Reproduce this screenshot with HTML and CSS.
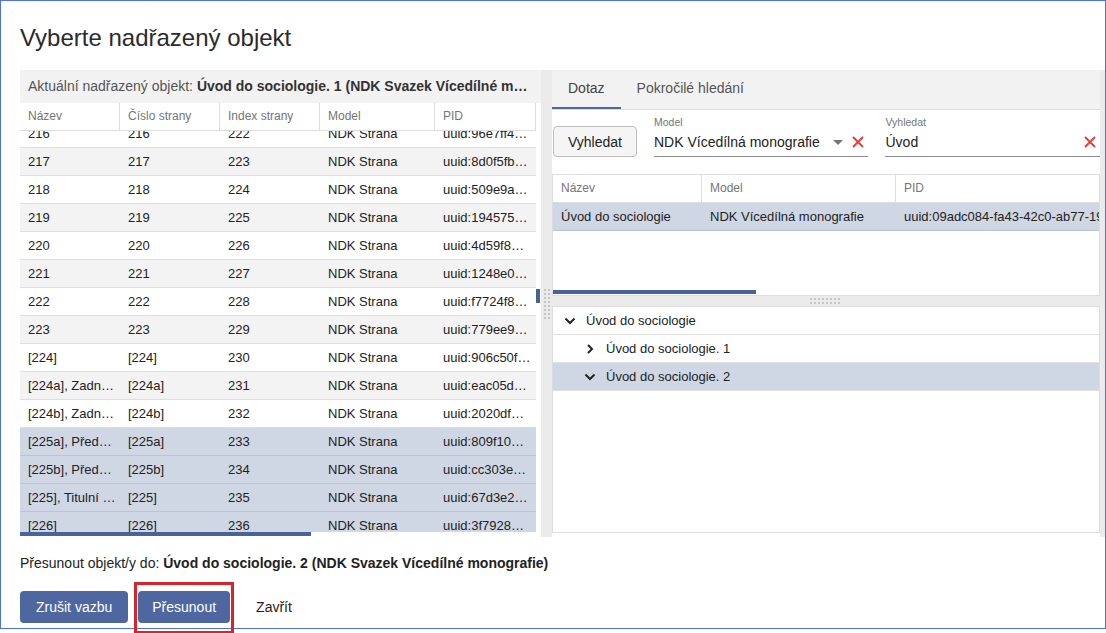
FILE: index.html
```html
<!DOCTYPE html>
<html lang="cs">
<head>
<meta charset="utf-8">
<title>Vyberte nadřazený objekt</title>
<link rel="stylesheet" href="styles.css">
</head>
<body>
<div class="frame">
  <h1 class="title">Vyberte nadřazený objekt</h1>
  <div class="split">
    <section class="left">
      <div class="current">Aktuální nadřazený objekt: <b>Úvod do sociologie. 1 (NDK Svazek Vícedílné m…</b></div>
      <div class="table-area">
        <div class="table">
          <div class="thead">
            <span>Název</span><span>Číslo strany</span><span>Index strany</span><span>Model</span><span>PID</span>
          </div>
          <div class="tbody">
            <div class="rows">
              <div class="row"><span>216</span><span>216</span><span>222</span><span>NDK Strana</span><span>uuid:96e7ff4…</span></div>
              <div class="row"><span>217</span><span>217</span><span>223</span><span>NDK Strana</span><span>uuid:8d0f5fb…</span></div>
              <div class="row"><span>218</span><span>218</span><span>224</span><span>NDK Strana</span><span>uuid:509e9a…</span></div>
              <div class="row"><span>219</span><span>219</span><span>225</span><span>NDK Strana</span><span>uuid:194575…</span></div>
              <div class="row"><span>220</span><span>220</span><span>226</span><span>NDK Strana</span><span>uuid:4d59f8…</span></div>
              <div class="row"><span>221</span><span>221</span><span>227</span><span>NDK Strana</span><span>uuid:1248e0…</span></div>
              <div class="row"><span>222</span><span>222</span><span>228</span><span>NDK Strana</span><span>uuid:f7724f8…</span></div>
              <div class="row"><span>223</span><span>223</span><span>229</span><span>NDK Strana</span><span>uuid:779ee9…</span></div>
              <div class="row"><span>[224]</span><span>[224]</span><span>230</span><span>NDK Strana</span><span>uuid:906c50f…</span></div>
              <div class="row"><span>[224a], Zadn…</span><span>[224a]</span><span>231</span><span>NDK Strana</span><span>uuid:eac05d…</span></div>
              <div class="row"><span>[224b], Zadn…</span><span>[224b]</span><span>232</span><span>NDK Strana</span><span>uuid:2020df…</span></div>
              <div class="row sel"><span>[225a], Před…</span><span>[225a]</span><span>233</span><span>NDK Strana</span><span>uuid:809f10…</span></div>
              <div class="row sel"><span>[225b], Před…</span><span>[225b]</span><span>234</span><span>NDK Strana</span><span>uuid:cc303e…</span></div>
              <div class="row sel"><span>[225], Titulní …</span><span>[225]</span><span>235</span><span>NDK Strana</span><span>uuid:67d3e2…</span></div>
              <div class="row sel"><span>[226]</span><span>[226]</span><span>236</span><span>NDK Strana</span><span>uuid:3f7928…</span></div>
            </div>
          </div>
          <div class="hscroll"><div class="hthumb"></div></div>
        </div>
        <div class="vscroll"><div class="vthumb"></div></div>
      </div>
    </section>

    <div class="gutter-v"><div class="grip-v"></div></div>

    <section class="right">
      <div class="tabs">
        <div class="tab active">Dotaz</div>
        <div class="tab">Pokročilé hledání</div>
      </div>
      <div class="form">
        <button class="btn-search" type="button">Vyhledat</button>
        <div class="field">
          <label>Model</label>
          <div class="input">
            <span class="val">NDK Vícedílná monografie</span>
            <span class="caret"></span>
            <svg class="clear" width="12" height="12" viewBox="0 0 12 12"><path d="M1 1L11 11M11 1L1 11" stroke="#e53935" stroke-width="1.8" fill="none"/></svg>
          </div>
        </div>
        <div class="field">
          <label>Vyhledat</label>
          <div class="input">
            <span class="val">Úvod</span>
            <svg class="clear" width="12" height="12" viewBox="0 0 12 12"><path d="M1 1L11 11M11 1L1 11" stroke="#e53935" stroke-width="1.8" fill="none"/></svg>
          </div>
        </div>
      </div>
      <div class="results">
        <div class="r-head"><span>Název</span><span>Model</span><span>PID</span></div>
        <div class="r-row"><span>Úvod do sociologie</span><span>NDK Vícedílná monografie</span><span>uuid:09adc084-fa43-42c0-ab77-19c2e0a1b7d4</span></div>
        <div class="r-scroll"><div class="r-thumb"></div></div>
      </div>
      <div class="gutter-h"><div class="grip-h"></div></div>
      <div class="tree">
        <div class="tree-row lvl1">
          <svg class="tog" width="12" height="8" viewBox="0 0 12 8"><path d="M1.5 1.5L6 6L10.5 1.5" stroke="#222" stroke-width="2" fill="none"/></svg>
          <span>Úvod do sociologie</span>
        </div>
        <div class="tree-row lvl2">
          <svg class="tog" width="12" height="10" viewBox="0 0 12 10"><path d="M4 1L8 5L4 9" stroke="#222" stroke-width="2" fill="none"/></svg>
          <span>Úvod do sociologie. 1</span>
        </div>
        <div class="tree-row lvl2 sel">
          <svg class="tog" width="12" height="8" viewBox="0 0 12 8"><path d="M1.5 1.5L6 6L10.5 1.5" stroke="#222" stroke-width="2" fill="none"/></svg>
          <span>Úvod do sociologie. 2</span>
        </div>
      </div>
    </section>
    <div class="edge"></div>
  </div>

  <p class="target">Přesunout objekt/y do: <b>Úvod do sociologie. 2 (NDK Svazek Vícedílné monografie)</b></p>

  <div class="actions">
    <button class="btn" type="button">Zrušit vazbu</button>
    <button class="btn compact" type="button">Přesunout</button>
    <button class="btn link" type="button">Zavřít</button>
  </div>

  <div class="annot"></div>
</div>
</body>
</html>
```
FILE: styles.css
```css
* { box-sizing: border-box; }

html, body {
  margin: 0;
  background: #fff;
}

body {
  width: 1106px;
  height: 633px;
  overflow: hidden;
  font-family: "Liberation Sans", Arial, sans-serif;
  color: #222;
}

.frame {
  position: relative;
  width: 1106px;
  height: 629px;
  border: 1px solid #4f6fe6;
  padding: 0 0 0 19px;
  display: flex;
  flex-direction: column;
}

.title {
  margin: 23px 0 0;
  font-size: 24px;
  font-weight: normal;
  line-height: 28px;
  color: #2b2b2b;
}

.split {
  margin-top: 18px;
  height: 467px;
  display: flex;
  background: #ebebeb;
}

/* ---------- left pane ---------- */
.left {
  width: 521px;
  display: flex;
  flex-direction: column;
  background: #fff;
}

.current {
  height: 33px;
  padding: 0 8px;
  background: #f2f2f2;
  font-size: 14px;
  line-height: 33px;
  color: #555;
  white-space: nowrap;
  overflow: hidden;
}

.current b { color: #333; }

.table-area {
  flex: 1;
  display: flex;
  min-height: 0;
}

.table {
  width: 516px;
  display: flex;
  flex-direction: column;
}

.thead,
.row {
  display: grid;
  grid-template-columns: 100px 100px 100px 115px 101px;
}

.thead {
  height: 28px;
  border-bottom: 1px solid #dddddd;
}

.thead span {
  padding: 0 8px;
  border-right: 1px solid #dddddd;
  font-size: 12px;
  line-height: 27px;
  color: #757575;
  white-space: nowrap;
  overflow: hidden;
}

.tbody {
  height: 401px;
  overflow: hidden;
}

.rows { margin-top: -11px; }

.row {
  height: 28px;
  border-bottom: 1px solid #dedede;
  font-size: 13px;
  line-height: 27px;
  background: #fff;
}

.row:nth-child(even) { background: #f3f3f3; }

.row.sel {
  background: #d0d7e4;
  border-bottom-color: #bcc3d1;
}

.row span {
  padding: 0 8px;
  white-space: nowrap;
  overflow: hidden;
}

.hscroll {
  height: 5px;
  background: #fff;
}

.hthumb {
  width: 291px;
  height: 4px;
  background: #4a6396;
}

.vscroll {
  width: 5px;
  background: #fff;
  padding-top: 186px;
}

.vthumb {
  width: 4px;
  height: 14px;
  background: #4a6396;
}

/* ---------- gutters ---------- */
.gutter-v {
  width: 11px;
  display: flex;
  align-items: center;
  justify-content: center;
}

.grip-v {
  width: 6px;
  height: 30px;
  background-image:
    linear-gradient(to right, transparent 2px, #ebebeb 2px),
    linear-gradient(to bottom, #c6c6c6 2px, #ebebeb 2px);
  background-size: 4px 4px;
}

.gutter-h {
  height: 10px;
  display: flex;
  align-items: center;
  justify-content: center;
  background: #ebebeb;
}

.grip-h {
  width: 32px;
  height: 6px;
  background-image:
    linear-gradient(to right, transparent 2px, #ebebeb 2px),
    linear-gradient(to bottom, #c6c6c6 2px, #ebebeb 2px);
  background-size: 4px 4px;
}

/* ---------- right pane ---------- */
.right {
  width: 548px;
  display: flex;
  flex-direction: column;
  background: #fff;
}

.tabs {
  height: 40px;
  display: flex;
  background: #f2f2f2;
  border-bottom: 1px solid #dcdcdc;
}

.tab {
  padding: 0 16px;
  font-size: 14px;
  line-height: 37px;
  color: #555;
}

.tab.active {
  color: #444;
  box-shadow: inset 0 -2px 0 #4e67a0;
}

.form {
  height: 64px;
  padding: 6px 0 0 1px;
  display: flex;
  align-items: flex-start;
  gap: 17px;
}

.btn-search {
  margin-top: 10px;
  height: 31px;
  padding: 0 14px;
  border: 1px solid #bdbdbd;
  border-radius: 4px;
  background: #f5f5f5;
  font-family: inherit;
  font-size: 14px;
  color: #222;
}

.field { width: 215px; }

.field label {
  display: block;
  font-size: 10.5px;
  line-height: 12px;
  color: #757575;
}

.input {
  height: 29px;
  display: flex;
  align-items: center;
  border-bottom: 1px solid #8c8c8c;
  font-size: 14px;
}

.input .val {
  flex: 1;
  white-space: nowrap;
  overflow: hidden;
}

.caret {
  width: 0;
  height: 0;
  margin-right: 9px;
  border-left: 5px solid transparent;
  border-right: 5px solid transparent;
  border-top: 5px solid #757575;
}

.clear {
  margin-right: 4px;
  flex: none;
}

.results {
  height: 122px;
  display: flex;
  flex-direction: column;
  border: 1px solid #dddddd;
}

.r-head,
.r-row {
  display: grid;
  grid-template-columns: 149px 194px 1fr;
  height: 28px;
}

.r-head { border-bottom: 1px solid #dddddd; }

.r-head span {
  padding: 0 8px;
  font-size: 12px;
  line-height: 27px;
  color: #757575;
  border-right: 1px solid #dddddd;
}

.r-head span:last-child { border-right: 0; }

.r-row {
  background: #d0d7e4;
  border-bottom: 1px solid #bcc3d1;
  font-size: 13px;
  line-height: 27px;
}

.r-row span {
  padding: 0 8px;
  white-space: nowrap;
  overflow: hidden;
}

.r-scroll {
  margin-top: auto;
  height: 5px;
}

.r-thumb {
  width: 203px;
  height: 4px;
  background: #4a6396;
}

.tree {
  height: 227px;
  border: 1px solid #dddddd;
}

.tree-row {
  height: 28px;
  display: flex;
  align-items: center;
  gap: 10px;
  border-bottom: 1px solid #e0e0e0;
  font-size: 13px;
}

.tree-row.lvl1 { padding-left: 11px; }
.tree-row.lvl2 { padding-left: 31px; }
.tree-row.sel { background: #d0d7e4; }

.tog { flex: none; }

.edge { width: 5px; }

/* ---------- footer ---------- */
.target {
  margin: 16px 0 0;
  font-size: 14px;
  line-height: 20px;
  color: #222;
}

.actions {
  margin-top: 18px;
  display: flex;
  gap: 10px;
}

.btn {
  height: 32px;
  padding: 0 16px;
  border: 0;
  border-radius: 4px;
  background: #4e67a0;
  color: #fff;
  font-family: inherit;
  font-size: 14px;
}

.btn.compact { padding: 0 14px; }

.btn.link {
  background: transparent;
  color: #222;
}

.annot {
  position: absolute;
  left: 133px;
  top: 581px;
  width: 100px;
  height: 52px;
  border: 3px solid #d7262b;
}
```
